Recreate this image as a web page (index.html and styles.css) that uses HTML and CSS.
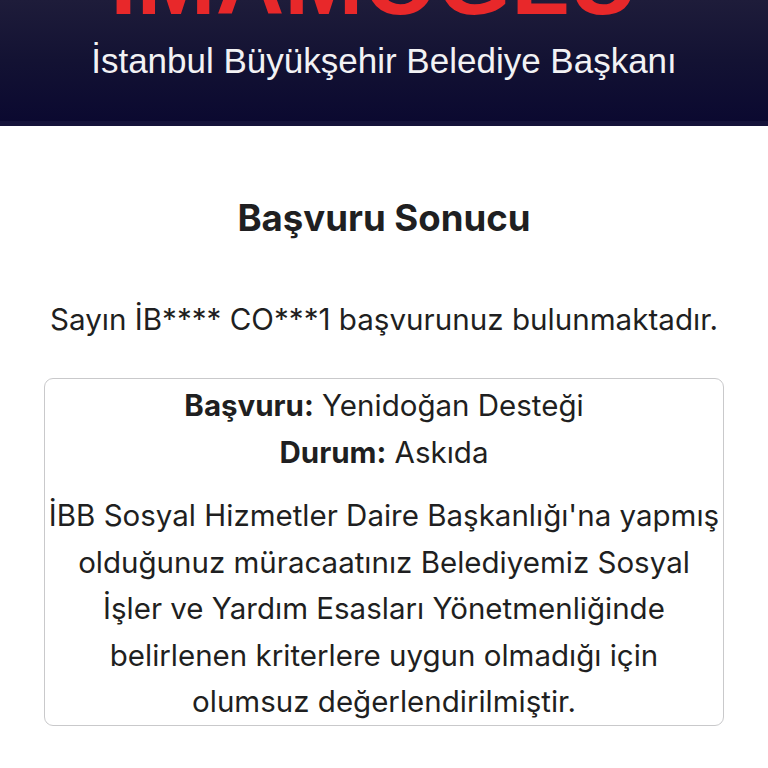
FILE: index.html
```html
<!DOCTYPE html>
<html lang="tr">
<head>
<meta charset="utf-8">
<title>Başvuru Sonucu</title>
<link rel="stylesheet" href="styles.css">
</head>
<body>
<header class="hero">
  <div class="hero-name">İMAMOĞLU</div>
  <div class="hero-sub">İstanbul Büyükşehir Belediye Başkanı</div>
</header>
<main class="content">
  <h2 class="title">Başvuru Sonucu</h2>
  <p class="lead">Sayın İB**** CO***1 başvurunuz bulunmaktadır.</p>
  <section class="result">
    <div class="row"><b>Başvuru:</b> Yenidoğan Desteği</div>
    <div class="row"><b>Durum:</b> Askıda</div>
    <p class="note">İBB Sosyal Hizmetler Daire Başkanlığı'na yapmış<br>olduğunuz müracaatınız Belediyemiz Sosyal<br>İşler ve Yardım Esasları Yönetmenliğinde<br>belirlenen kriterlere uygun olmadığı için<br>olumsuz değerlendirilmiştir.</p>
  </section>
</main>
</body>
</html>
```
FILE: styles.css
```css
html, body {
  margin: 0;
  padding: 0;
  background: #ffffff;
}
body {
  font-family: Inter, "Noto Sans", "Liberation Sans", sans-serif;
  color: #1f1f21;
}
.hero {
  height: 121px;
  overflow: hidden;
  background: linear-gradient(180deg, #1e1c3a 0%, #131233 50%, #0b0930 100%);
  border-bottom: 5px solid #15133a;
  text-align: center;
}
.hero-name {
  font-family: "Liberation Sans", Arial, sans-serif;
  font-weight: 700;
  font-size: 95px;
  line-height: 94px;
  color: #e8282a;
  margin-top: -66px;
  padding-right: 20px;
}
.hero-sub {
  font-family: "Liberation Sans", Arial, sans-serif;
  font-size: 35px;
  line-height: 40px;
  color: #f2f2f4;
  margin-top: 13px;
}
.content {
  padding: 0 44px;
  text-align: center;
}
.title {
  margin: 72px 0 0;
  font-size: 36.6px;
  line-height: 40px;
  font-weight: 700;
}
.lead {
  margin: 61px 0 0;
  font-size: 29.6px;
  line-height: 40px;
}
.result {
  margin-top: 39px;
  border: 1.5px solid #c9c9cb;
  border-radius: 9px;
  padding: 3px 0 0;
  font-size: 29.5px;
  line-height: 46.5px;
}
.row b {
  font-weight: 700;
}
.note {
  margin: 17px 0 0;
}
```
